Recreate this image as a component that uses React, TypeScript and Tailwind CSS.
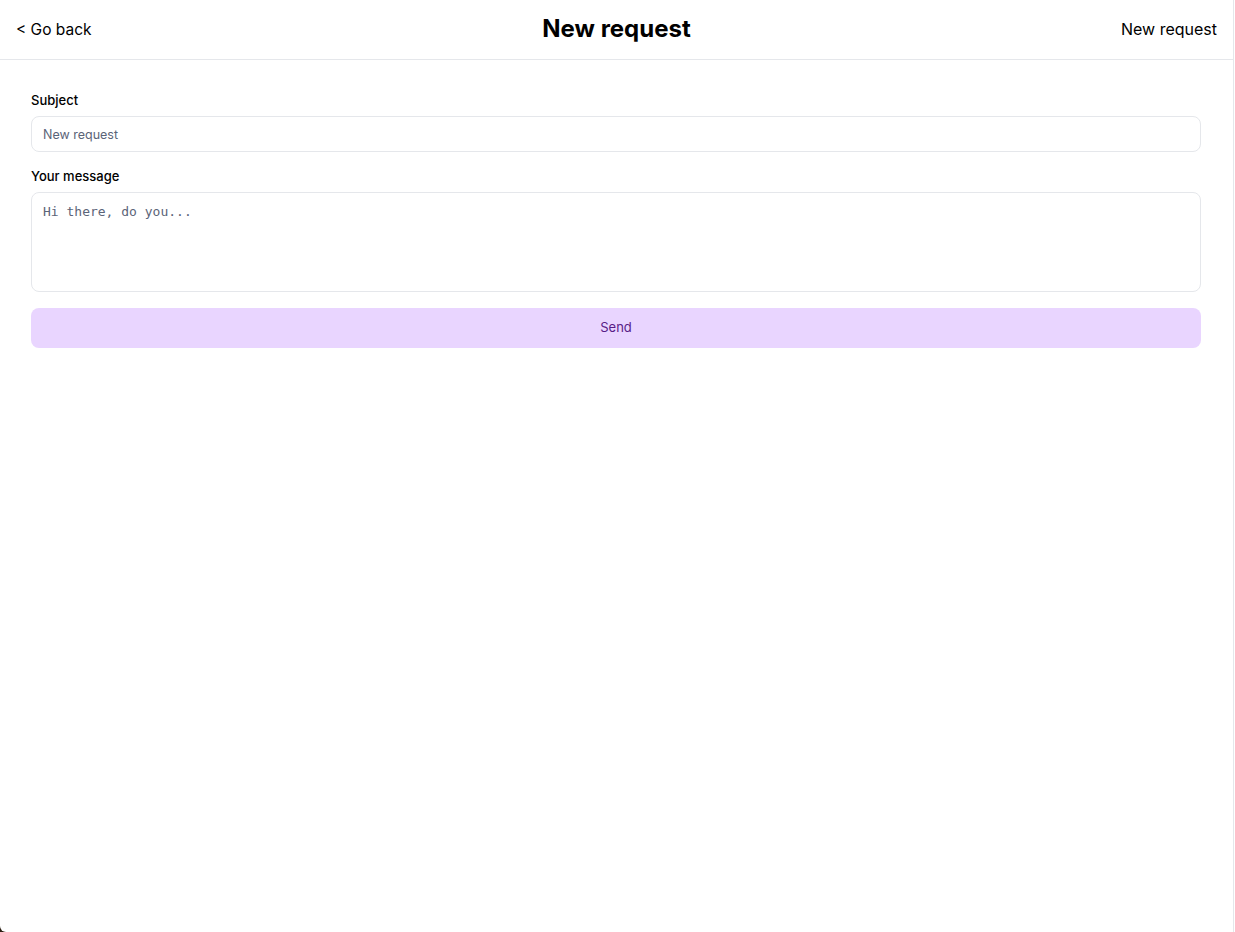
import React, { useState } from 'react';

const App: React.FC = () => {
    const [subject, setSubject] = useState<string>('');
    const [message, setMessage] = useState<string>('');

    return (
        <div className="w-full h-[932px] bg-[#2b1e12]" style={{ fontFamily: 'Inter, "Noto Sans", sans-serif' }}>
            <div className="flex h-full bg-white rounded-bl-md overflow-hidden">
                <div className="w-[1234px] h-full border-r border-gray-200 flex flex-col">
                    <header className="h-[60px] border-b border-gray-200 flex items-center justify-between px-4 relative">
                        <button className="text-[15.5px] text-black leading-5">&lt; Go back</button>
                        <h1 className="absolute left-1/2 -translate-x-1/2 text-2xl font-bold text-black -mt-0.5">New request</h1>
                        <span className="text-base text-black -mt-0.5">New request</span>
                    </header>

                    <div className="pl-[31px] pr-8 pt-8">
                        <label htmlFor="subject" className="block text-[13px] leading-4 font-medium text-black mb-2">Subject</label>
                        <input
                            id="subject"
                            type="text"
                            value={subject}
                            onChange={(e) => setSubject(e.target.value)}
                            placeholder="New request"
                            className="w-full h-9 px-[11px] text-[12.5px] border border-gray-200 rounded-lg outline-none placeholder:text-[#5b6478]"
                        />

                        <label htmlFor="message" className="block mt-4 text-[13px] leading-4 font-medium text-black mb-2">Your message</label>
                        <textarea
                            id="message"
                            value={message}
                            onChange={(e) => setMessage(e.target.value)}
                            placeholder="Hi there, do you..."
                            className="block w-full h-[100px] px-[11px] py-[9px] text-[13px] leading-5 border border-gray-200 rounded-lg outline-none resize-none placeholder:text-[#5b6478]"
                            style={{ fontFamily: '"DejaVu Sans Mono", "Liberation Mono", monospace' }}
                        />

                        <button className="mt-4 w-full h-10 rounded-lg bg-[#e9d5ff] text-[13px] text-[#581c87]">Send</button>
                    </div>
                </div>
                <div className="flex-1 bg-white" />
            </div>
        </div>
    );
};

export default App;
